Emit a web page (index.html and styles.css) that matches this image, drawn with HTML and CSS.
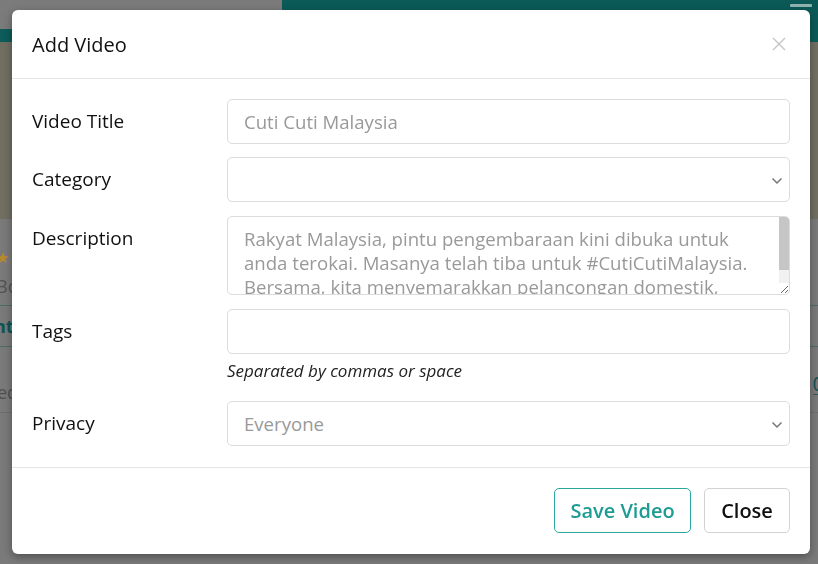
FILE: index.html
```html
<!DOCTYPE html>
<html lang="en">
<head>
<meta charset="utf-8">
<title>Add Video</title>
<link rel="stylesheet" href="styles.css">
</head>
<body>
<div class="page">
  <header class="topbar">
    <div class="tb-left">
      <div class="tb-gray"></div>
      <div class="tb-teal"></div>
    </div>
    <div class="tb-right"><span class="burger"></span></div>
  </header>
  <section class="hero"></section>
  <section class="content">
    <div class="c-row c-star"><span class="star">★</span></div>
    <div class="c-row c-meta"><span>Bo</span></div>
    <div class="c-row c-tabs"><span class="tab-l">nt</span></div>
    <div class="c-row c-list"><span class="list-l">ed</span><span class="tab-r">0</span></div>
  </section>
</div>

<div class="backdrop">
  <div class="modal">
    <div class="modal-header">
      <h4 class="modal-title">Add Video</h4>
      <button class="close-x" aria-label="Close">
        <svg width="14" height="14" viewBox="0 0 14 14"><path d="M1 1L13 13M13 1L1 13" stroke="#c4c4c4" stroke-width="1.4" fill="none"/></svg>
      </button>
    </div>
    <div class="modal-body">
      <div class="form-row">
        <label class="f-label">Video Title</label>
        <div class="f-field"><input class="f-input" type="text" value="Cuti Cuti Malaysia" readonly></div>
      </div>
      <div class="form-row">
        <label class="f-label">Category</label>
        <div class="f-field select-wrap">
          <div class="f-input f-select"></div>
          <svg class="chev" width="12" height="8" viewBox="0 0 12 8"><path d="M1.5 1.5L6 6L10.5 1.5" stroke="#777" stroke-width="1.5" fill="none"/></svg>
        </div>
      </div>
      <div class="form-row row-desc">
        <label class="f-label">Description</label>
        <div class="f-field">
          <textarea class="f-input f-textarea" readonly>Rakyat Malaysia, pintu pengembaraan kini dibuka untuk anda terokai. Masanya telah tiba untuk #CutiCutiMalaysia. Bersama, kita menyemarakkan pelancongan domestik, menyokong industri pelancongan negara.</textarea>
          <div class="sb"><div class="sb-thumb"></div></div>
        </div>
      </div>
      <div class="form-row">
        <label class="f-label">Tags</label>
        <div class="f-field">
          <input class="f-input" type="text" readonly>
          <p class="help">Separated by commas or space</p>
        </div>
      </div>
      <div class="form-row">
        <label class="f-label">Privacy</label>
        <div class="f-field select-wrap">
          <div class="f-input f-select">Everyone</div>
          <svg class="chev" width="12" height="8" viewBox="0 0 12 8"><path d="M1.5 1.5L6 6L10.5 1.5" stroke="#777" stroke-width="1.5" fill="none"/></svg>
        </div>
      </div>
    </div>
    <div class="modal-footer">
      <button class="btn btn-save">Save Video</button>
      <button class="btn btn-close">Close</button>
    </div>
  </div>
</div>
</body>
</html>
```

FILE: styles.css
```css
* { box-sizing: border-box; }
html, body { margin: 0; padding: 0; }
body {
  width: 818px;
  height: 564px;
  overflow: hidden;
  font-family: "Open Sans", "Noto Sans", "Liberation Sans", sans-serif;
  background: #787878;
}

/* dimmed page behind the modal */
.page { width: 818px; height: 564px; background: #7a7a7a; }
.topbar { display: flex; height: 42px; }
.tb-left { width: 282px; display: flex; flex-direction: column; }
.tb-gray { height: 29px; background: #7b7b7b; }
.tb-teal { flex: 1; background: #0d5c5a; }
.tb-right { flex: 1; background: #0b5a58; display: flex; justify-content: flex-end; padding: 4px 6px 0 0; }
.burger { display: block; width: 22px; height: 3px; background: #8fb3b1; border-radius: 1px; }
.hero { height: 177px; background: #716e62; }
.c-row { display: flex; justify-content: space-between; align-items: center; font-size: 18px; color: #4b4b4b; }
.c-star { height: 50px; padding-top: 28px; align-items: flex-start; }
.star { color: #b88a2a; font-size: 15px; line-height: 20px; margin-left: -4px; }
.c-meta { height: 37px; align-items: flex-start; padding-top: 5px; border-bottom: 1px solid #4f6b68; }
.c-meta span { margin-left: -4px; color: #535353; line-height: 24px; }
.c-tabs { height: 41px; border-bottom: 1px solid #4f6b68; }
.tab-l { color: #0d5554; font-weight: 700; margin-left: -6px; }
.c-list { height: 66px; align-items: flex-start; border-bottom: 1px solid #6e6e6e; }
.list-l { margin-left: -3px; color: #505050; margin-top: 33px; line-height: 24px; }
.tab-r { color: #0d5554; font-size: 20px; margin-right: -6px; margin-top: 26px; border-bottom: 1px solid #2c5c5a; line-height: 21px; }

/* modal */
.backdrop {
  position: fixed;
  inset: 0;
  padding: 10px 8px 0 12px;
}
.modal {
  width: 798px;
  height: 544px;
  background: #fff;
  border-radius: 6px;
  box-shadow: 0 3px 9px rgba(0,0,0,0.35);
  display: flex;
  flex-direction: column;
}
.modal-header {
  height: 69px;
  display: flex;
  align-items: center;
  justify-content: space-between;
  padding: 0 24px 0 20px;
  border-bottom: 1px solid #e5e5e5;
}
.modal-title {
  margin: 0;
  font-size: 20px;
  font-weight: 400;
  color: #111;
  padding-top: 1px;
}
.close-x {
  background: none;
  border: 0;
  padding: 0;
  width: 14px;
  height: 14px;
  display: flex;
  cursor: pointer;
}

.modal-body { padding: 20px 20px 0; height: 389px; border-bottom: 1px solid #e5e5e5; }
.form-row {
  display: grid;
  grid-template-columns: 195px 1fr;
  margin-bottom: 13px;
}
.row-desc { padding-top: 1px; margin-bottom: 14px; }
.f-label {
  font-size: 19px;
  font-weight: 500;
  color: #111;
  line-height: 28px;
  padding-top: 8px;
}
.f-field { position: relative; }
.f-input {
  display: block;
  width: 100%;
  height: 45px;
  border: 1px solid #dcdcdc;
  border-radius: 5px;
  padding: 0 16px;
  font-family: inherit;
  font-size: 18.6px;
  color: #999;
  background: #fff;
  outline: none;
}
.f-select { display: flex; align-items: center; }
.chev { position: absolute; right: 7px; top: 20px; }
.f-textarea {
  height: 79px;
  padding: 10px 26px 0 16px;
  line-height: 24px;
  resize: vertical;
  overflow: hidden;
}
.sb {
  position: absolute;
  right: 1px;
  top: 1px;
  width: 10px;
  height: 66px;
  background: #f1f1f1;
  border-top-right-radius: 4px;
}
.sb-thumb { height: 53px; background: #c6c6c6; border-top-right-radius: 4px; }
.help {
  margin: 5px 0 5px;
  font-size: 17px;
  font-style: italic;
  line-height: 24px;
  color: #222;
}

.modal-footer {
  flex: 1;
  display: flex;
  justify-content: flex-end;
  align-items: flex-start;
  gap: 13px;
  padding: 20px 20px 0;
}
.btn {
  height: 45px;
  border-radius: 5px;
  background: #fff;
  font-family: inherit;
  font-size: 20px;
  font-weight: 600;
  padding: 0;
  white-space: nowrap;
  cursor: pointer;
}
.btn-save { width: 137px; border: 1px solid #2aa89f; color: #1e9c93; }
.btn-close { width: 86px; border: 1px solid #d2d2d2; color: #111; }
```
